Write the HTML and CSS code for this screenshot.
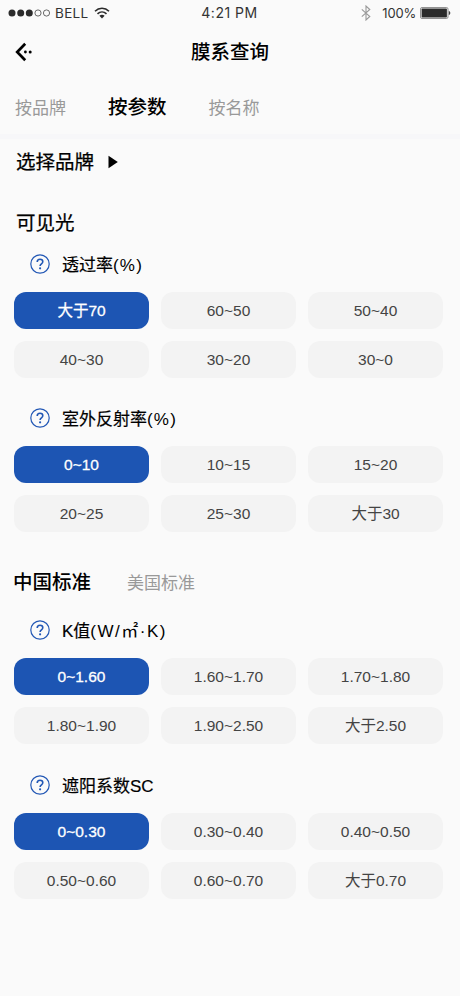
FILE: index.html
```html
<!DOCTYPE html>
<html lang="zh-CN">

	<head>
		<meta charset="utf-8" />
		<meta name="viewport" content="width=device-width, initial-scale=1">
		<title>膜系查询</title>
		<link rel="stylesheet" href="styles.css">
	</head>

	<body>
		<svg class="defs" width="0" height="0">
			<symbol id="help" viewBox="0 0 20 20">
				<circle cx="10" cy="10" r="9.2" fill="none" stroke="currentColor" stroke-width="1.2"/>
				<path d="M7.2 8.1c0-1.7 1.1-2.8 2.8-2.8s2.8 1 2.8 2.5c0 2-2.7 2.1-2.7 4.2" fill="none" stroke="currentColor" stroke-width="1.6"/>
				<circle cx="10.1" cy="14.3" r="1.1" fill="currentColor"/>
			</symbol>
		</svg>

		<!--状态栏-->
		<div class="status">
			<div class="status-left">
				<svg width="42" height="10" viewBox="0 0 42 10">
					<g fill="#2b2b2b"><circle cx="4" cy="5" r="3.5"/><circle cx="12.7" cy="5" r="3.5"/><circle cx="21.3" cy="5" r="3.5"/></g>
					<g fill="none" stroke="#444" stroke-width=".8"><circle cx="30" cy="5" r="3.1"/><circle cx="38.5" cy="5" r="3.1"/></g>
				</svg>
				<span class="carrier">BELL</span>
				<svg width="16" height="12" viewBox="0 0 16 12">
					<g fill="none" stroke="#2b2b2b" stroke-width="1.6"><path d="M1 4.2c4-3.9 10-3.9 14 0"/><path d="M3.5 6.9c2.6-2.5 6.4-2.5 9 0"/></g>
					<path d="M5.4 8.8c1.5-1.4 3.7-1.4 5.2 0L8 11.5z" fill="#2b2b2b"/>
				</svg>
			</div>
			<span class="time">4:21 PM</span>
			<div class="status-right">
				<svg width="10" height="16" viewBox="0 0 10 16">
					<path d="M.8 4.3l8 7.2L5 15V1l3.8 3.5-8 7.2" fill="none" stroke="#999" stroke-width="1.1"/>
				</svg>
				<span class="power">100%</span>
				<svg width="31" height="12" viewBox="0 0 31 12">
					<rect x=".5" y=".5" width="27.5" height="11" rx="1.5" fill="#fafafa" stroke="#777" stroke-width=".8"/>
					<rect x="1.6" y="1.6" width="25.3" height="8.8" rx=".6" fill="#2b2b2b"/>
					<path d="M28.8 4c2 .4 2 3.6 0 4z" fill="#444"/>
				</svg>
			</div>
		</div>

		<div class="nav">
			<svg class="back" width="18" height="20" viewBox="0 0 18 20">
				<path d="M10.2 1.8L2.2 10l8 8.2" fill="none" stroke="#000" stroke-width="2.7"/>
				<circle cx="10.4" cy="10" r="1.4"/><circle cx="15.2" cy="10" r="1.5"/>
			</svg>
			<h1 class="title">膜系查询</h1>
		</div>

		<div class="tabs">
			<span class="tab">按品牌</span>
			<span class="tab active">按参数</span>
			<span class="tab">按名称</span>
		</div>

		<div class="main">
			<div class="brand">
				<span>选择品牌</span>
				<svg width="10" height="14" viewBox="0 0 10 14"><path d="M.5 .8L9.8 7 .5 13.2z"/></svg>
			</div>

			<!--可见光-->
			<h2 class="group">可见光</h2>
			<div class="param">
				<div class="param-title"><svg class="help"><use href="#help"/></svg><span>透过率<span class="percent">(%)</span></span></div>
				<div class="options">
					<span class="option active">大于70</span>
					<span class="option">60~50</span>
					<span class="option">50~40</span>
					<span class="option">40~30</span>
					<span class="option">30~20</span>
					<span class="option">30~0</span>
				</div>
			</div>
			<div class="param">
				<div class="param-title"><svg class="help"><use href="#help"/></svg><span>室外反射率<span class="percent">(%)</span></span></div>
				<div class="options">
					<span class="option active">0~10</span>
					<span class="option">10~15</span>
					<span class="option">15~20</span>
					<span class="option">20~25</span>
					<span class="option">25~30</span>
					<span class="option">大于30</span>
				</div>
			</div>

			<!--标准切换-->
			<div class="standards">
				<span class="standard active">中国标准</span>
				<span class="standard">美国标准</span>
			</div>
			<div class="param">
				<div class="param-title"><svg class="help"><use href="#help"/></svg><span>K值<span class="unit">(W/㎡·K)</span></span></div>
				<div class="options">
					<span class="option active">0~1.60</span>
					<span class="option">1.60~1.70</span>
					<span class="option">1.70~1.80</span>
					<span class="option">1.80~1.90</span>
					<span class="option">1.90~2.50</span>
					<span class="option">大于2.50</span>
				</div>
			</div>
			<div class="param last">
				<div class="param-title"><svg class="help"><use href="#help"/></svg><span>遮阳系数SC</span></div>
				<div class="options">
					<span class="option active">0~0.30</span>
					<span class="option">0.30~0.40</span>
					<span class="option">0.40~0.50</span>
					<span class="option">0.50~0.60</span>
					<span class="option">0.60~0.70</span>
					<span class="option">大于0.70</span>
				</div>
			</div>
		</div>
	</body>

</html>
```
FILE: styles.css
```css
* {
	box-sizing: border-box;
}
body {
	margin: 0;
	min-height: 996px;
	background-color: #fafafa;
	color: #000;
	font-family: "Liberation Sans", "Noto Sans CJK SC", sans-serif;
}
svg {
	display: block;
	flex: none;
}
.defs {
	position: absolute;
}
.status {
	display: grid;
	grid-template-columns: 1fr auto 1fr;
	align-items: center;
	height: 26px;
	padding: 0 9px 0 8px;
	font-family: Inter, sans-serif;
	font-size: 14px;
	line-height: 20px;
	color: #333;
}
.status-left,
.status-right {
	display: flex;
	align-items: center;
}
.time {
	letter-spacing: 0.5px;
}
.carrier {
	margin: 0 6px 0 5px;
	font-size: 13.5px;
	letter-spacing: 0.3px;
}
.status-right {
	justify-content: flex-end;
}
.power {
	margin: 0 4px 0 11px;
	font-size: 13px;
	letter-spacing: -0.2px;
}
.nav {
	display: grid;
	grid-template-columns: 1fr auto 1fr;
	align-items: center;
	height: 52px;
	padding: 0 15px;
}
.title {
	margin: 0;
	font-size: 19.5px;
	font-weight: 500;
	line-height: 28px;
}
.tabs {
	display: flex;
	align-items: baseline;
	gap: 42px;
	height: 61px;
	padding: 15px 15px 0;
	border-bottom: 5px solid #f7f7f9;
	font-size: 17px;
	line-height: 28px;
	color: #999;
}
.tab.active {
	font-size: 19.5px;
	font-weight: 500;
	color: #000;
}
.main {
	padding: 9px 16px 0 14px;
}
.brand {
	display: flex;
	align-items: center;
	gap: 14px;
	height: 28px;
	padding-left: 2px;
	font-size: 19.5px;
	line-height: 28px;
	-webkit-text-stroke: 0.25px;
}
.group {
	margin: 33px 0 14px 2px;
	font-size: 19.5px;
	font-weight: 400;
	line-height: 28px;
	-webkit-text-stroke: 0.25px;
}
.param {
	margin-bottom: 27px;
}
.param-title {
	display: flex;
	align-items: center;
	gap: 12px;
	height: 28px;
	margin-bottom: 13px;
	padding: 0 0 2px 17px;
	font-size: 17px;
	line-height: 24px;
	-webkit-text-stroke: 0.2px;
}
.param-title > span {
	padding-top: 3px;
}
.percent {
	letter-spacing: 1.2px;
	-webkit-text-stroke: 0;
}
.unit {
	letter-spacing: 1.5px;
	-webkit-text-stroke: 0;
}
.help {
	width: 20px;
	height: 20px;
	margin-left: -1px;
	color: #2358b5;
}
.options {
	display: grid;
	grid-template-columns: repeat(3, 135px);
	gap: 12px;
}
.option {
	height: 37px;
	border-radius: 12px;
	background-color: #f3f3f3;
	font-size: 15.5px;
	line-height: 37px;
	text-align: center;
	color: #444;
}
.option.active {
	background-color: #1d55b3;
	color: #fff;
	-webkit-text-stroke: 0.3px;
}
.standards {
	display: flex;
	align-items: baseline;
	gap: 36px;
	height: 28px;
	margin: 36px 0 21px -1px;
	font-size: 17px;
	line-height: 28px;
	color: #999;
}
.standard.active {
	font-size: 19.5px;
	font-weight: 500;
	color: #000;
}
.last {
	margin-top: 28px;
}
```
